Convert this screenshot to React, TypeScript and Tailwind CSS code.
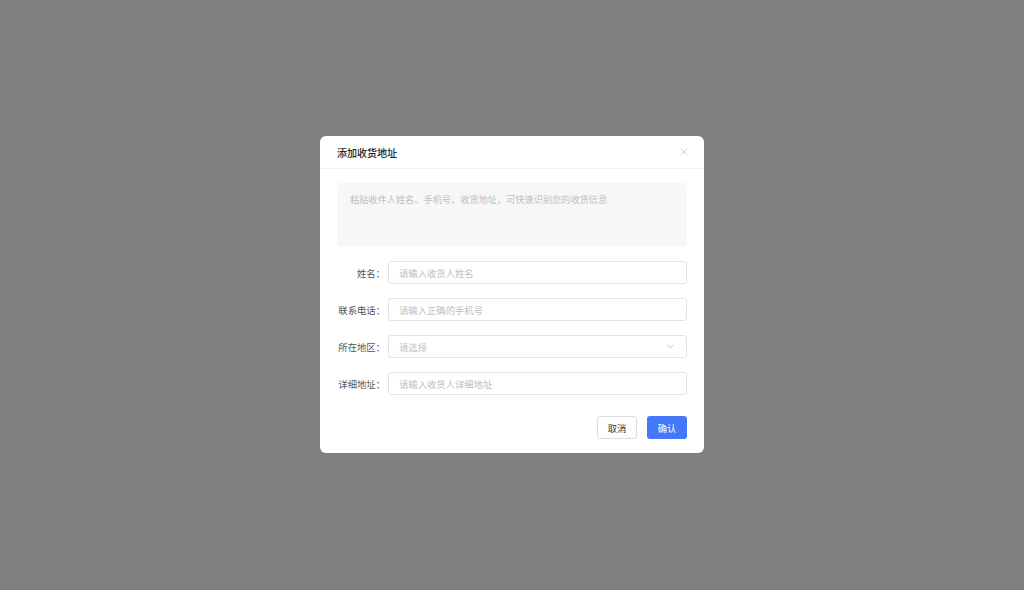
import { X, ChevronDown } from 'lucide-react'

const font = { fontFamily: '"Noto Sans CJK SC", "Noto Sans", sans-serif' }

function Field({ label, placeholder, select }: { label: string; placeholder: string; select?: boolean }) {
  return (
    <div className="flex items-center">
      <label className="w-[51px] shrink-0 pr-[3px] text-right text-[9.33px] text-[#555]">{label}：</label>
      <div className="flex h-[23px] flex-1 items-center justify-between rounded-[3px] border border-[#e3e3e3] bg-white px-[10px]">
        <span className="text-[9.33px] text-[#c0c0c0]">{placeholder}</span>
        {select && <ChevronDown size={11} strokeWidth={1.5} className="text-[#999]" />}
      </div>
    </div>
  )
}

export default function App() {
  return (
    <div style={font} className="flex h-[590px] w-[1024px] items-center justify-center bg-[#808080]">
      <div className="mb-px w-[384px] overflow-hidden rounded-[6px] bg-white">
        <div className="flex h-[33px] items-center justify-between border-b border-[#f2f2f2] pl-[17px] pr-[14px]">
          <h2 className="text-[10px] font-medium text-[#222]">添加收货地址</h2>
          <X size={12} strokeWidth={1.3} className="text-[#b5b5b5]" />
        </div>
        <div className="px-[17px] pt-[14px] pb-[14px]">
          <div className="h-[63px] rounded-[3px] bg-[#f7f7f7] px-[13px] pt-[10px]">
            <p className="text-[9.2px] text-[#c0c0c0]">粘贴收件人姓名、手机号、收货地址，可快速识别您的收货信息</p>
          </div>
          <div className="mt-[15px] flex flex-col gap-[14px]">
            <Field label="姓名" placeholder="请输入收货人姓名" />
            <Field label="联系电话" placeholder="请输入正确的手机号" />
            <Field label="所在地区" placeholder="请选择" select />
            <Field label="详细地址" placeholder="请输入收货人详细地址" />
          </div>
          <div className="mt-[21px] flex justify-end gap-[10px]">
            <button className="h-[23px] w-[40px] rounded-[3px] border border-[#dcdcdc] bg-white text-[9.33px] text-[#333]">取消</button>
            <button className="h-[23px] w-[40px] rounded-[3px] bg-[#4478f6] text-[9.33px] text-white">确认</button>
          </div>
        </div>
      </div>
    </div>
  )
}
